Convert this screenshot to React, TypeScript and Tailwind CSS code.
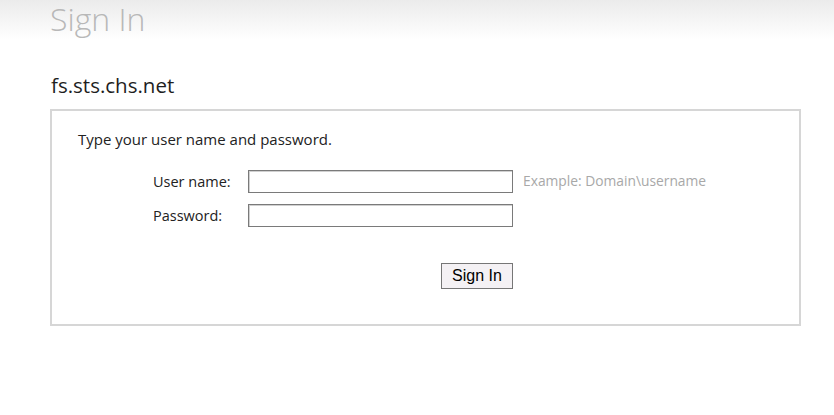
export default function App() {
  return (
    <div className="min-h-[415px] w-[834px] bg-white font-['Open_Sans',sans-serif] text-[#222]">
      {/* header strip */}
      <div className="h-[40px] bg-gradient-to-b from-[#ebebeb] to-white pl-[50px]">
        <h1 className="text-[32px] leading-[38px] font-light text-[#b8b8b8]">Sign In</h1>
      </div>

      <div className="px-[50px] pt-[32px]">
        <div className="text-[20.5px] leading-[26px] pl-[1px] text-[#1e1e1e]">fs.sts.chs.net</div>

        <div className="mt-[11px] w-[751px] h-[217px] border-2 border-[#d6d6d6] pl-[26px] pt-[17px]">
          <p className="text-[15px] leading-[22px]">Type your user name and password.</p>

          <div className="mt-[20px] grid grid-cols-[95px_265px_auto] gap-y-[11px] items-center pl-[75px]">
            <label className="text-[14.5px]">User name:</label>
            <input className="h-[23px] w-[265px] border border-[#7a7a7a] shadow-[inset_1px_1px_0_#d0d0d0] bg-white outline-none" />
            <span className="pl-[10px] text-[13.8px] text-[#a8a8a8]">Example: Domain\username</span>

            <label className="text-[14.5px]">Password:</label>
            <input type="password" className="h-[23px] w-[265px] border border-[#7a7a7a] shadow-[inset_1px_1px_0_#d0d0d0] bg-white outline-none" />
            <span />
          </div>

          <div className="mt-[36px] flex pl-[363px]">
            <button className="h-[26px] w-[72px] border border-[#767676] bg-[#f4f1f4] font-['Liberation_Sans',sans-serif] text-[16px] text-black">
              Sign In
            </button>
          </div>
        </div>
      </div>
    </div>
  );
}
